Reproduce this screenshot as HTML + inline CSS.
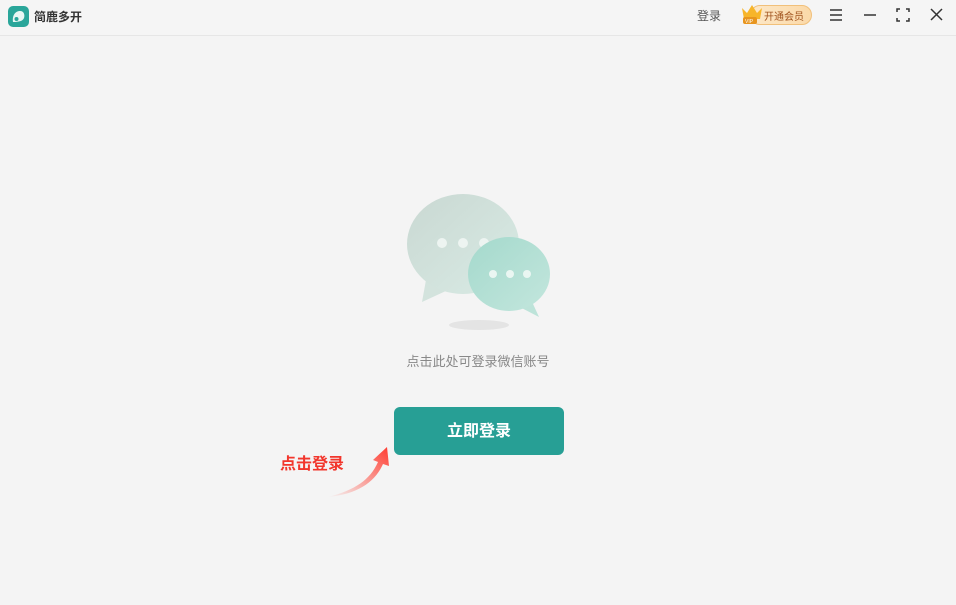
<!DOCTYPE html>
<html><head><meta charset="utf-8"><style>
body{margin:0;width:956px;height:605px;background:#f4f4f4;font-family:"Liberation Sans","Noto Sans CJK SC",sans-serif;position:relative;overflow:hidden}
.top{position:absolute;left:0;top:0;width:956px;height:35px;border-bottom:1px solid #e6e6e6;background:#f5f5f5}
.t{position:absolute;white-space:nowrap}
</style></head><body>
<div class="top">
<svg class="t" style="left:8px;top:6px" width="21" height="21" viewBox="0 0 21 21"><rect width="21" height="21" rx="5" fill="#2aa69a"/><path d="M5 16 C4 10 7 5 12 5 C16 5 17 9 16 12 C15 15 11 16 5 16Z" fill="#e8f7f4"/><circle cx="8.5" cy="13" r="2" fill="#2aa69a"/></svg>
<div class="t" style="left:34px;top:8px;font-size:12px;font-weight:bold;color:#333">简鹿多开</div>
<div class="t" style="left:697px;top:7px;font-size:12px;color:#555">登录</div>
<div class="t" style="left:750px;top:5px;width:62px;height:20px;border-radius:10px;background:linear-gradient(90deg,#fde8c8,#fbd9a8);border:1px solid #f1c07a;box-sizing:border-box"></div>
<div class="t" style="left:764px;top:8px;font-size:10px;color:#a0521c">开通会员</div>
<svg class="t" style="left:740px;top:2px" width="24" height="24" viewBox="0 0 24 24"><path d="M2 6 L7 11 L12 3 L17 11 L22 6 L20 17 L4 17Z" fill="#f7b52a"/><rect x="3" y="15" width="14" height="7" rx="2" fill="#e8951e"/><text x="5" y="21" font-size="5" fill="#fff" font-family="Liberation Sans">VIP</text></svg>
<svg class="t" style="left:829px;top:8px" width="14" height="14"><path d="M1 2H13M1 7H13M1 12H13" stroke="#333" stroke-width="1.5"/></svg>
<svg class="t" style="left:863px;top:8px" width="14" height="14"><path d="M1 7H13" stroke="#333" stroke-width="1.5"/></svg>
<svg class="t" style="left:896px;top:8px" width="14" height="14"><path d="M1 4V1H4M10 1H13V4M13 10V13H10M4 13H1V10" stroke="#333" stroke-width="1.5" fill="none"/></svg>
<svg class="t" style="left:930px;top:8px" width="13" height="13"><path d="M1 1L12 12M12 1L1 12" stroke="#333" stroke-width="1.5"/></svg>
</div>
<svg class="t" style="left:400px;top:185px" width="160" height="150" viewBox="0 0 160 150">
<defs><linearGradient id="g1" x1="0" y1="0" x2="1" y2="1"><stop offset="0" stop-color="#c9d8d2"/><stop offset="1" stop-color="#d9ebe5"/></linearGradient>
<linearGradient id="g2" x1="0" y1="0" x2="1" y2="1"><stop offset="0" stop-color="#a4d9cc"/><stop offset="1" stop-color="#c3e6dd"/></linearGradient></defs>
<ellipse cx="79" cy="140" rx="30" ry="5" fill="#e4e4e4"/>
<path d="M26 95 L22 117 L48 105Z" fill="#d3e3dd"/>
<ellipse cx="63" cy="59" rx="56" ry="50" fill="url(#g1)"/>
<circle cx="42" cy="58" r="5" fill="#edf4f1"/><circle cx="63" cy="58" r="5" fill="#edf4f1"/><circle cx="84" cy="58" r="5" fill="#edf4f1"/>
<path d="M128 108 L139 132 L112 118Z" fill="#bde3d9"/>
<ellipse cx="109" cy="89" rx="41" ry="37" fill="url(#g2)"/>
<circle cx="93" cy="89" r="4" fill="#eaf6f2"/><circle cx="110" cy="89" r="4" fill="#eaf6f2"/><circle cx="127" cy="89" r="4" fill="#eaf6f2"/>
</svg>
<div class="t" style="left:0;width:956px;text-align:center;top:351px;font-size:13px;color:#888">点击此处可登录微信账号</div>
<div class="t" style="left:394px;top:407px;width:170px;height:48px;border-radius:6px;background:#279f95;color:#fff;font-size:16px;font-weight:bold;text-align:center;line-height:50px">立即登录</div>
<div class="t" style="left:280px;top:450px;font-size:16px;font-weight:bold;color:#f2362c">点击登录</div>
<svg class="t" style="left:320px;top:440px" width="75" height="60" viewBox="0 0 75 60"><defs><linearGradient id="ar" x1="0" y1="1" x2="1" y2="0"><stop offset="0" stop-color="#ff4a3d" stop-opacity="0"/><stop offset="1" stop-color="#ff3b30"/></linearGradient></defs>
<path d="M8 57 C35 50 50 40 58 22 L53 20 L67 7 L69 26 L63 24 C55 42 38 54 8 57Z" fill="url(#ar)"/></svg>
</body></html>
